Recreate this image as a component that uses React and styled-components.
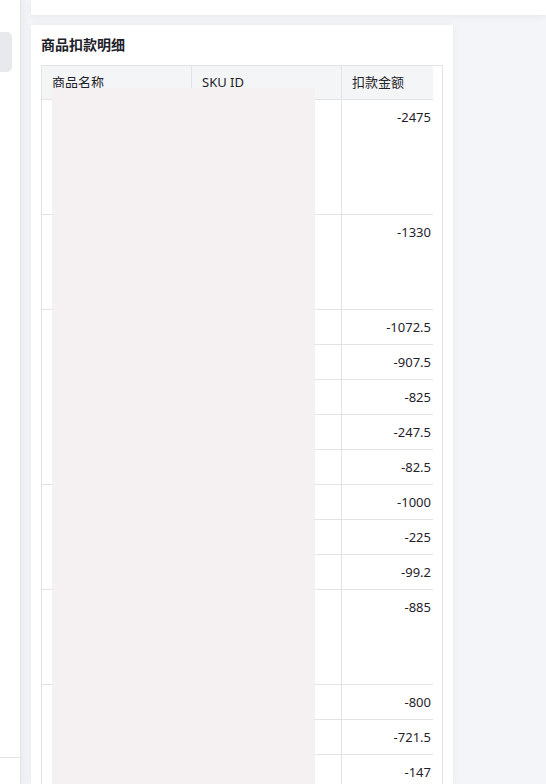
import React from 'react';
import styled, { createGlobalStyle } from 'styled-components';

const GlobalStyle = createGlobalStyle`
  html, body {
    margin: 0;
    padding: 0;
    height: 100%;
    overflow: hidden;
    background: #f4f5f8;
    font-family: "Noto Sans", "Noto Sans CJK SC", sans-serif;
    color: #1f2329;
  }
  * { box-sizing: border-box; }
`;

const Page = styled.div`
  display: flex;
  height: 784px;
  overflow: hidden;
`;

const Sidebar = styled.aside`
  display: flex;
  flex-direction: column;
  width: 21px;
  flex-shrink: 0;
  background: #fff;
  border-right: 1px solid #e3e4e8;
  box-shadow: 2px 0 10px rgba(30, 35, 60, 0.06);
  position: relative;
  z-index: 1;
`;

const MenuItem = styled.div`
  margin-top: 32px;
  width: 12px;
  height: 40px;
  background: #e8e9ed;
  border-radius: 0 5px 5px 0;
`;

const SidebarFooter = styled.div`
  margin-top: auto;
  height: 27px;
  border-top: 1px solid #e3e4e8;
`;

const Main = styled.main`
  flex: 1;
  display: flex;
  flex-direction: column;
  gap: 10px;
  padding-left: 10px;
  min-width: 0;
`;

const TopCard = styled.div`
  height: 15px;
  background: #fff;
  box-shadow: 0 2px 6px rgba(30, 35, 60, 0.06);
`;

const Card = styled.section`
  width: 422px;
  background: #fff;
  padding: 10px 10px 0;
  box-shadow: 0 0 8px rgba(30, 35, 60, 0.05);
  flex: 1;
  min-height: 0;
`;

const Title = styled.h3`
  margin: 0 0 10px;
  font-size: 14px;
  line-height: 20px;
  font-weight: 700;
  color: #1d2129;
`;

const TableWrap = styled.div`
  position: relative;
  width: 402px;
  border: 1px solid #e1e3e6;
  border-bottom: none;
`;

const Table = styled.table`
  width: 391px;
  table-layout: fixed;
  border-collapse: separate;
  border-spacing: 0;
  font-size: 13px;
`;

const Th = styled.th`
  height: 34px;
  padding: 0 10px;
  text-align: left;
  font-weight: 400;
  line-height: 17px;
  background: #f4f5f7;
  border-bottom: 1px solid #e1e3e6;
  border-right: ${p => (p.last ? 'none' : '1px solid #e1e3e6')};
  color: #1f2329;
`;

const Td = styled.td`
  height: ${p => p.h || 35}px;
  padding: 9px ${p => (p.amount ? '2px' : '10px')} 0 10px;
  vertical-align: top;
  line-height: 17px;
  text-align: ${p => (p.amount ? 'right' : 'left')};
  border-bottom: 1px solid #e1e3e6;
  border-right: ${p => (p.amount ? 'none' : '1px solid #e1e3e6')};
  color: #1f2329;
`;

const Redaction = styled.div`
  position: absolute;
  left: 10px;
  top: 22px;
  width: 263px;
  bottom: -40px;
  background: #f5f1f2;
`;

const groups = [
  { rows: [{ amount: '-2475', h: 115 }] },
  { rows: [{ amount: '-1330', h: 95 }] },
  { rows: ['-1072.5', '-907.5', '-825', '-247.5', '-82.5'].map(a => ({ amount: a })) },
  { rows: ['-1000', '-225', '-99.2'].map(a => ({ amount: a })) },
  { rows: [{ amount: '-885', h: 95 }] },
  { rows: ['-800', '-721.5', '-147'].map(a => ({ amount: a })) },
];

export default function App() {
  return (
    <>
      <GlobalStyle />
      <Page>
        <Sidebar>
          <MenuItem />
          <SidebarFooter />
        </Sidebar>
        <Main>
          <TopCard />
          <Card>
            <Title>商品扣款明细</Title>
            <TableWrap>
              <Table>
                <colgroup>
                  <col style={{ width: 150 }} />
                  <col style={{ width: 150 }} />
                  <col style={{ width: 91 }} />
                </colgroup>
                <thead>
                  <tr>
                    <Th>商品名称</Th>
                    <Th>SKU ID</Th>
                    <Th last>扣款金额</Th>
                  </tr>
                </thead>
                <tbody>
                  {groups.map((g, gi) =>
                    g.rows.map((r, ri) => (
                      <tr key={`${gi}-${ri}`}>
                        {ri === 0 && <Td rowSpan={g.rows.length} h={r.h} />}
                        <Td h={r.h} />
                        <Td h={r.h} amount>{r.amount}</Td>
                      </tr>
                    ))
                  )}
                </tbody>
              </Table>
              <Redaction />
            </TableWrap>
          </Card>
        </Main>
      </Page>
    </>
  );
}
